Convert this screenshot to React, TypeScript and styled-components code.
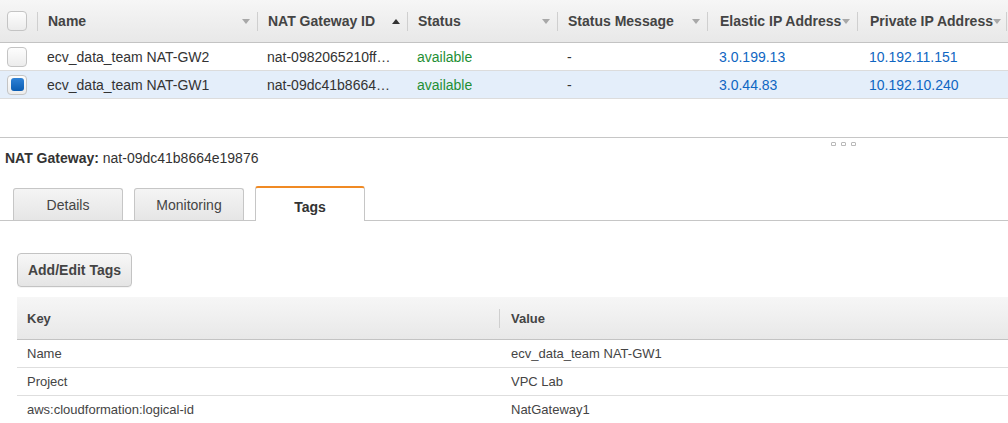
import React from "react";
import styled, { createGlobalStyle, css } from "styled-components";

const GlobalStyle = createGlobalStyle`
  html, body { margin: 0; padding: 0; background: #fff; }
  body {
    font-family: "Liberation Sans", Arial, Helvetica, sans-serif;
    color: #333;
    -webkit-font-smoothing: antialiased;
  }
  * { box-sizing: border-box; }
`;

const Page = styled.div`
  width: 1008px;
  height: 423px;
  overflow: hidden;
  display: flex;
  flex-direction: column;
`;

/* ---------- top grid ---------- */

const TopPane = styled.div`
  height: 138px;
  flex: none;
  border-bottom: 1px solid #c6c6c6;
`;

const headerBg = css`
  background: linear-gradient(#f6f6f6, #e8e8e8);
`;

const HeadRow = styled.div`
  ${headerBg};
  display: flex;
  height: 43px;
  border-bottom: 1px solid #c3c3c3;
`;

const BodyRow = styled.div<{ $selected?: boolean }>`
  display: flex;
  height: 28px;
  border-bottom: 1px solid #dcdcdc;
  background: ${(p) => (p.$selected ? "#e4eefa" : "#fff")};
`;

const HeadCell = styled.div<{ $w?: number }>`
  display: flex;
  align-items: center;
  flex: ${(p) => (p.$w ? `0 0 ${p.$w}px` : "1 1 auto")};
  width: ${(p) => (p.$w ? `${p.$w}px` : "auto")};
  min-width: 0;
  font-size: 14px;
  font-weight: bold;
  color: #444;
  white-space: nowrap;
`;

const Divider = styled.span`
  flex: none;
  width: 1px;
  height: 19px;
  background: #cfcfcf;
`;

const HeadLabel = styled.span<{ $gap?: number }>`
  margin-left: ${(p) => p.$gap ?? 10}px;
`;

const SortIcon = styled.svg`
  flex: none;
  margin-left: auto;
  margin-right: 7px;
`;

const Cell = styled.div<{ $w?: number; $tone?: "green" | "blue"; $pad?: number }>`
  display: flex;
  align-items: center;
  flex: ${(p) => (p.$w ? `0 0 ${p.$w}px` : "1 1 auto")};
  width: ${(p) => (p.$w ? `${p.$w}px` : "auto")};
  min-width: 0;
  padding: 0 10px 0 ${(p) => p.$pad ?? 10}px;
  font-size: 14px;
  color: ${(p) =>
    p.$tone === "green" ? "#1f8f35" : p.$tone === "blue" ? "#0f66c2" : "#333"};
`;

const CellText = styled.span`
  display: block;
  overflow: hidden;
  white-space: nowrap;
  text-overflow: ellipsis;
  min-width: 0;
`;

const CheckCell = styled.div`
  flex: 0 0 37px;
  display: flex;
  align-items: center;
  padding-left: 7px;
`;

const CheckBox = styled.span<{ $checked?: boolean }>`
  width: 20px;
  height: 20px;
  border: 1px solid #c4c4c4;
  border-radius: 4px;
  background: linear-gradient(#fdfdfd, #ececec);
  display: flex;
  align-items: center;
  justify-content: center;
  &::after {
    content: "";
    display: ${(p) => (p.$checked ? "block" : "none")};
    width: 13px;
    height: 13px;
    border-radius: 3px;
    background: linear-gradient(#2f82d6, #0a5cb2);
  }
`;

const Sort = ({ dir }: { dir: "down" | "up" }) =>
  dir === "down" ? (
    <SortIcon width="8" height="5" viewBox="0 0 8 5">
      <path d="M0 0 L8 0 L4 5 Z" fill="#a8a8a8" />
    </SortIcon>
  ) : (
    <SortIcon width="8" height="5" viewBox="0 0 8 5">
      <path d="M0 5 L8 5 L4 0 Z" fill="#333" />
    </SortIcon>
  );

const columns: { label: string; w: number; sort: "down" | "up"; pad: number }[] = [
  { label: "Name", w: 220, sort: "down", pad: 10 },
  { label: "NAT Gateway ID", w: 150, sort: "up", pad: 10 },
  { label: "Status", w: 150, sort: "down", pad: 10 },
  { label: "Status Message", w: 150, sort: "down", pad: 10 },
  { label: "Elastic IP Address", w: 150, sort: "down", pad: 12 },
  { label: "Private IP Address", w: 149, sort: "down", pad: 12 },
];

const rows = [
  {
    name: "ecv_data_team NAT-GW2",
    id: "nat-0982065210ff…",
    status: "available",
    msg: "-",
    eip: "3.0.199.13",
    pip: "10.192.11.151",
    selected: false,
  },
  {
    name: "ecv_data_team NAT-GW1",
    id: "nat-09dc41b8664e19876",
    status: "available",
    msg: "-",
    eip: "3.0.44.83",
    pip: "10.192.10.240",
    selected: true,
  },
];

/* ---------- detail pane ---------- */

const DetailPane = styled.div`
  position: relative;
  flex: 1;
  display: flex;
  flex-direction: column;
`;

const Grip = styled.div`
  position: absolute;
  top: 4px;
  left: 831px;
  display: flex;
  gap: 5px;
`;

const GripDot = styled.span`
  width: 5px;
  height: 4px;
  border: 1px solid #b9b9b9;
  border-radius: 1px 1px 0 0;
`;

const Title = styled.div`
  margin: 12px 0 0 5px;
  font-size: 14px;
  line-height: 17px;
  color: #333;
`;

const TabStrip = styled.div`
  margin-top: 20px;
  height: 34px;
  display: flex;
  align-items: flex-end;
  gap: 11px;
  padding-left: 13px;
  border-bottom: 1px solid #c6c6c6;
`;

const Tab = styled.div<{ $active?: boolean }>`
  width: 110px;
  display: flex;
  align-items: center;
  justify-content: center;
  font-size: 14px;
  color: #444;
  border: 1px solid #c6c6c6;
  border-bottom: none;
  border-radius: 3px 3px 0 0;
  ${(p) =>
    p.$active
      ? css`
          height: 35px;
          margin-bottom: -1px;
          padding-top: 4px;
          background: #fff;
          border-top: 2px solid #f08a24;
          font-weight: bold;
          color: #333;
        `
      : css`
          height: 32px;
          background: linear-gradient(#f4f4f4, #e6e6e6);
        `}
`;

const Content = styled.div`
  padding: 32px 0 0 17px;
  display: flex;
  flex-direction: column;
  align-items: flex-start;
`;

const Button = styled.button`
  width: 115px;
  height: 34px;
  border: 1px solid #c3c3c3;
  border-radius: 4px;
  background: linear-gradient(#f7f7f7, #e5e5e5);
  font-family: inherit;
  font-size: 14px;
  font-weight: bold;
  color: #444;
  padding: 0;
  box-shadow: 0 1px 0 rgba(0, 0, 0, 0.04);
`;

const TagTable = styled.div`
  margin-top: 10px;
  width: 991px;
`;

const TagHead = styled.div`
  ${headerBg};
  display: flex;
  height: 43px;
  border-bottom: 1px solid #c3c3c3;
`;

const TagHeadCell = styled.div<{ $w?: number; $first?: boolean }>`
  display: flex;
  align-items: center;
  flex: ${(p) => (p.$w ? `0 0 ${p.$w}px` : "1 1 auto")};
  padding-left: ${(p) => (p.$first ? "10px" : "0")};
  font-size: 13px;
  font-weight: bold;
  color: #444;
`;

const TagRow = styled.div`
  display: flex;
  height: 28px;
  border-bottom: 1px solid #dedede;
`;

const TagCell = styled.div<{ $w?: number; $pad: number }>`
  display: flex;
  align-items: center;
  flex: ${(p) => (p.$w ? `0 0 ${p.$w}px` : "1 1 auto")};
  padding-left: ${(p) => p.$pad}px;
  font-size: 13px;
  color: #444;
  white-space: nowrap;
`;

const tags = [
  ["Name", "ecv_data_team NAT-GW1"],
  ["Project", "VPC Lab"],
  ["aws:cloudformation:logical-id", "NatGateway1"],
];

export default function App() {
  return (
    <Page>
      <GlobalStyle />
      <TopPane>
        <HeadRow>
          <CheckCell>
            <CheckBox />
          </CheckCell>
          {columns.map((c) => (
            <HeadCell key={c.label} $w={c.w}>
              <Divider />
              <HeadLabel $gap={c.pad}>{c.label}</HeadLabel>
              <Sort dir={c.sort} />
            </HeadCell>
          ))}
          <HeadCell>
            <Divider />
          </HeadCell>
        </HeadRow>
        {rows.map((r) => (
          <BodyRow key={r.name} $selected={r.selected}>
            <CheckCell>
              <CheckBox $checked={r.selected} />
            </CheckCell>
            <Cell $w={220}>
              <CellText>{r.name}</CellText>
            </Cell>
            <Cell $w={150}>
              <CellText>{r.id}</CellText>
            </Cell>
            <Cell $w={150} $tone="green">
              <CellText>{r.status}</CellText>
            </Cell>
            <Cell $w={150}>
              <CellText>{r.msg}</CellText>
            </Cell>
            <Cell $w={150} $tone="blue" $pad={12}>
              <CellText>{r.eip}</CellText>
            </Cell>
            <Cell $w={149} $tone="blue" $pad={12}>
              <CellText>{r.pip}</CellText>
            </Cell>
            <Cell />
          </BodyRow>
        ))}
      </TopPane>

      <DetailPane>
        <Grip>
          <GripDot />
          <GripDot />
          <GripDot />
        </Grip>
        <Title>
          <b>NAT Gateway:</b> nat-09dc41b8664e19876
        </Title>
        <TabStrip>
          <Tab>Details</Tab>
          <Tab>Monitoring</Tab>
          <Tab $active>Tags</Tab>
        </TabStrip>
        <Content>
          <Button>Add/Edit Tags</Button>
          <TagTable>
            <TagHead>
              <TagHeadCell $w={482} $first>
                Key
              </TagHeadCell>
              <TagHeadCell>
                <Divider />
                <HeadLabel $gap={11}>Value</HeadLabel>
              </TagHeadCell>
            </TagHead>
            {tags.map(([k, v]) => (
              <TagRow key={k}>
                <TagCell $w={482} $pad={10}>
                  {k}
                </TagCell>
                <TagCell $pad={12}>{v}</TagCell>
              </TagRow>
            ))}
          </TagTable>
        </Content>
      </DetailPane>
    </Page>
  );
}
